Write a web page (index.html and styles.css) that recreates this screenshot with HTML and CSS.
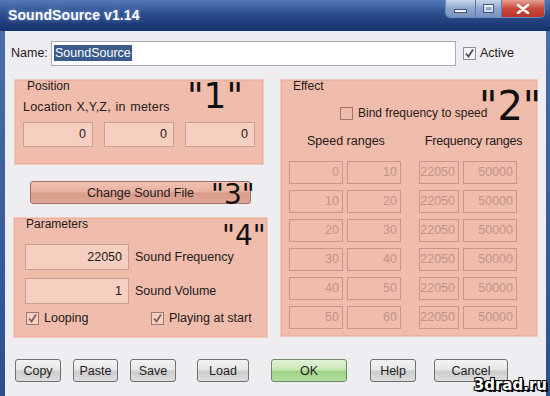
FILE: index.html
```html
<!DOCTYPE html>
<html lang="en">
  <head>
    <meta charset="UTF-8" />
    <title>SoundSource v1.14</title>
    <link rel="stylesheet" href="styles.css">
  </head>
  <body>
    <div class="window">
      <div class="titlebar">
        <span class="title">SoundSource v1.14</span>
        <div class="caption-buttons">
          <span class="cap cap-min"><i></i></span>
          <span class="cap cap-max"><i></i></span>
          <span class="cap cap-close">
            <svg width="14" height="10" viewBox="0 0 14 10"><path d="M2 1 L12 9 M12 1 L2 9" stroke="#fff" stroke-width="2.6" stroke-linecap="round"/></svg>
          </span>
        </div>
      </div>

      <div class="client">
        <div class="name-row">
          <label class="name-label">Name:</label>
          <div class="name-input"><span class="selected">SoundSource</span></div>
          <span class="check checked"><svg width="11" height="11" viewBox="0 0 11 11"><path d="M2 5.5 L4.5 8.5 L9 1.5" fill="none" stroke="#4a4a6a" stroke-width="1.8"/></svg></span>
          <span class="check-label">Active</span>
        </div>

        <div class="main">
          <div class="left-col">
            <div class="group position">
              <div class="group-title">Position</div>
              <div class="hint">Location X,Y,Z, in meters</div>
              <div class="xyz">
                <div class="field">0</div>
                <div class="field">0</div>
                <div class="field">0</div>
              </div>
              <span class="mark mark-1">"1"</span>
            </div>

            <button class="btn btn-salmon">Change Sound File</button>
            <span class="mark mark-3">"3"</span>

            <div class="group params">
              <div class="group-title">Parameters</div>
              <div class="param-row">
                <div class="field wide">22050</div>
                <span>Sound Frequency</span>
              </div>
              <div class="param-row">
                <div class="field wide">1</div>
                <span>Sound Volume</span>
              </div>
              <div class="param-checks">
                <div class="check-item">
                  <span class="check checked"><svg width="11" height="11" viewBox="0 0 11 11"><path d="M2 5.5 L4.5 8.5 L9 1.5" fill="none" stroke="#8a5a52" stroke-width="1.8"/></svg></span>
                  <span>Looping</span>
                </div>
                <div class="check-item">
                  <span class="check checked"><svg width="11" height="11" viewBox="0 0 11 11"><path d="M2 5.5 L4.5 8.5 L9 1.5" fill="none" stroke="#8a5a52" stroke-width="1.8"/></svg></span>
                  <span>Playing at start</span>
                </div>
              </div>
              <span class="mark mark-4">"4"</span>
            </div>
          </div>

          <div class="group effect">
            <div class="group-title">Effect</div>
            <div class="bind-row">
              <span class="check"></span>
              <span>Bind frequency to speed</span>
            </div>
            <div class="range-heads">
              <span>Speed ranges</span>
              <span>Frequency ranges</span>
            </div>
            <div class="range-grid">
              <div class="off">0</div><div class="off">10</div><div class="off">22050</div><div class="off">50000</div>
              <div class="off">10</div><div class="off">20</div><div class="off">22050</div><div class="off">50000</div>
              <div class="off">20</div><div class="off">30</div><div class="off">22050</div><div class="off">50000</div>
              <div class="off">30</div><div class="off">40</div><div class="off">22050</div><div class="off">50000</div>
              <div class="off">40</div><div class="off">50</div><div class="off">22050</div><div class="off">50000</div>
              <div class="off">50</div><div class="off">60</div><div class="off">22050</div><div class="off">50000</div>
            </div>
            <span class="mark mark-2">"2"</span>
          </div>
        </div>

        <div class="actions">
          <button class="btn b-copy">Copy</button>
          <button class="btn b-paste">Paste</button>
          <button class="btn b-save">Save</button>
          <button class="btn b-load">Load</button>
          <button class="btn btn-ok">OK</button>
          <button class="btn b-help">Help</button>
          <button class="btn b-cancel">Cancel</button>
        </div>
      </div>
      <span class="watermark">3drad.ru</span>
    </div>
  </body>
</html>
```

FILE: styles.css
```css
* {
  margin: 0;
  padding: 0;
  box-sizing: border-box;
}
html,
body {
  width: 550px;
  height: 396px;
  overflow: hidden;
  background: #3a5e9e;
  font-family: "Liberation Sans", Arial, sans-serif;
  font-size: 12px;
  color: #241a19;
}
/* window frame */
.window {
  position: relative;
  width: 550px;
  height: 396px;
  background: linear-gradient(#4a70b0, #2c4f8e);
  padding: 0 4px 0 5px;
}
.titlebar {
  height: 31px;
  display: flex;
  align-items: flex-start;
  justify-content: space-between;
  background: linear-gradient(#5479b9 0%, #2b4d8d 45%, #17316a 100%);
  margin: 0 -4px 0 -5px;
  padding-left: 8px;
}
.title {
  margin-top: 7px;
  color: #fff;
  font-weight: bold;
  font-size: 14px;
  letter-spacing: 0.1px;
  text-shadow: 0 0 4px rgba(170, 200, 255, 0.6);
}
.caption-buttons {
  display: flex;
  margin-right: 5px;
  height: 18px;
  border: 1px solid #6f8cc0;
  border-top: none;
  border-radius: 0 0 5px 5px;
  overflow: hidden;
}
.cap {
  display: flex;
  align-items: center;
  justify-content: center;
  height: 17px;
  background: linear-gradient(#c9d6ea, #8ea5cc 50%, #7a93c0);
  border-right: 1px solid #5d77a8;
}
.cap-min {
  width: 30px;
}
.cap-min i {
  display: block;
  width: 13px;
  height: 4px;
  margin-top: 4px;
  background: #eef2f8;
  border: 1px solid #45587c;
}
.cap-max {
  width: 26px;
}
.cap-max i {
  display: block;
  width: 11px;
  height: 9px;
  border: 1px solid #45587c;
  box-shadow: inset 0 2px 0 #eef2f8, inset 0 0 0 2px #cfd8e8;
}
.cap-close {
  width: 42px;
  border-right: none;
  background: linear-gradient(#e8a096, #c94a3c 50%, #b8352a);
}

/* client area */
.client {
  height: 365px;
  background: #eeedf1;
}
.name-row {
  display: flex;
  align-items: center;
  padding: 10px 0 0 6px;
  height: 34px;
}
.name-label {
  width: 40px;
  font-size: 12.5px;
}
.name-input {
  width: 405px;
  height: 25px;
  background: #fff;
  border: 1px solid #a9aab0;
  display: flex;
  align-items: center;
  padding-left: 2px;
  font-size: 12.5px;
}
.selected {
  background: #3a5b8c;
  color: #fff;
  padding: 1px 1px;
}
.name-row .check {
  margin-left: 7px;
  background: #f3f3f6;
  border-color: #8b8fa0;
}
.check-label {
  margin-left: 4px;
  font-size: 12.5px;
}
.check {
  display: inline-flex;
  align-items: center;
  justify-content: center;
  width: 13px;
  height: 13px;
  border: 1px solid #9b7770;
  background: #f6d0c3;
}

/* groups */
.main {
  display: flex;
  padding: 14px 8px 0 8px;
  gap: 12px;
}
.left-col {
  position: relative;
  width: 255px;
  display: flex;
  flex-direction: column;
}
.group {
  position: relative;
  background: #f0bcab;
  border: 1px solid #f3cabe;
  box-shadow: inset 0 0 0 1px #eab1a0;
}
.group-title {
  position: absolute;
  top: 0;
  left: 12px;
  line-height: 13px;
}
.mark {
  position: absolute;
  font-family: "DejaVu Sans", "Liberation Sans", sans-serif;
  color: #111;
  line-height: 1;
}
.position {
  width: 250px;
  height: 86px;
  margin-left: 1px;
  padding: 20px 0 0 8px;
}
.hint {
  font-size: 12.5px;
  line-height: 14px;
  word-spacing: 1px;
  letter-spacing: 0.2px;
}
.xyz {
  display: flex;
  gap: 11px;
  margin-top: 8px;
}
.field {
  width: 70px;
  height: 25px;
  background: #f7cfc1;
  border: 1px solid #c8a096;
  text-align: right;
  padding-right: 6px;
  line-height: 23px;
  font-size: 12.5px;
}
.field.wide {
  width: 104px;
}
.mark-1 {
  top: -2px;
  left: 172px;
  font-size: 36px;
}
.btn-salmon {
  margin: 16px 0 0 17px;
  width: 221px;
  height: 23px;
}
.mark-3 {
  top: 102px;
  left: 198px;
  font-size: 28px;
}
.params {
  margin-top: 13px;
  height: 121px;
  padding: 26px 0 0 11px;
}
.param-row {
  display: flex;
  align-items: center;
  gap: 6px;
  height: 26px;
  margin-bottom: 8px;
  font-size: 12.5px;
}
.param-row .field {
  height: 26px;
  line-height: 24px;
}
.param-checks {
  display: flex;
  margin-top: -1px;
  font-size: 12.5px;
}
.check-item {
  display: flex;
  align-items: center;
  gap: 5px;
}
.check-item:first-child {
  width: 126px;
  padding-left: 1px;
}
.mark-4 {
  top: 4px;
  left: 208px;
  font-size: 28px;
}

/* effect */
.effect {
  width: 258px;
  height: 258px;
  padding: 26px 0 0 0;
}
.bind-row {
  display: flex;
  align-items: center;
  gap: 5px;
  margin-left: 59px;
  font-size: 12px;
}
.bind-row .check {
  background: #f0bcab;
}
.range-heads {
  display: flex;
  margin-top: 14px;
  font-size: 12.5px;
}
.range-heads span:first-child {
  margin-left: 26px;
}
.range-heads span:last-child {
  margin-left: 40px;
  letter-spacing: -0.2px;
}
.range-grid {
  display: grid;
  grid-template-columns: 54px 54px 54px 54px;
  grid-auto-rows: 23px;
  column-gap: 4px;
  row-gap: 6px;
  margin: 13px 0 0 8px;
}
.range-grid .off:nth-child(4n + 3) {
  margin-left: 14px;
}
.off {
  border: 1px solid #c9968b;
  color: #c29488;
  text-align: right;
  padding-right: 3px;
  line-height: 21px;
  font-size: 12.5px;
}
.mark-2 {
  top: 6px;
  left: 198px;
  font-size: 40px;
}

/* buttons */
.btn {
  font-family: "Liberation Sans", Arial, sans-serif;
  font-size: 12.5px;
  color: #1e1e1e;
  height: 23px;
  border: 1px solid #707070;
  border-radius: 3px;
  background: linear-gradient(#f3f3f3 0%, #e6e6e6 48%, #cdcdcd 52%, #dcdcdc 100%);
}
.btn-salmon {
  border-color: #9c7067;
  background: linear-gradient(#f1c2b3 0%, #e8b09f 48%, #d99a89 52%, #e0a797 100%);
}
.actions {
  display: flex;
  padding: 21px 0 0 10px;
}
.b-copy { width: 46px; }
.b-paste { width: 45px; margin-left: 12px; }
.b-save { width: 46px; margin-left: 12px; }
.b-load { width: 52px; margin-left: 21px; }
.btn-ok {
  width: 76px;
  margin-left: 22px;
  border-color: #6e8a64;
  background: linear-gradient(#e1f3d6 0%, #c6e8b4 48%, #9fd487 52%, #b4dd9f 100%);
}
.b-help { width: 46px; margin-left: 23px; }
.b-cancel { width: 74px; margin-left: 18px; }
.watermark {
  position: absolute;
  right: 3px;
  bottom: 2px;
  font-family: "DejaVu Sans", sans-serif;
  font-weight: bold;
  font-size: 15px;
  color: #fff;
  text-shadow: -1px -1px 0 #000, 1px -1px 0 #000, -1px 1px 0 #000, 1px 1px 0 #000, 2px 2px 0 #000;
}
```
